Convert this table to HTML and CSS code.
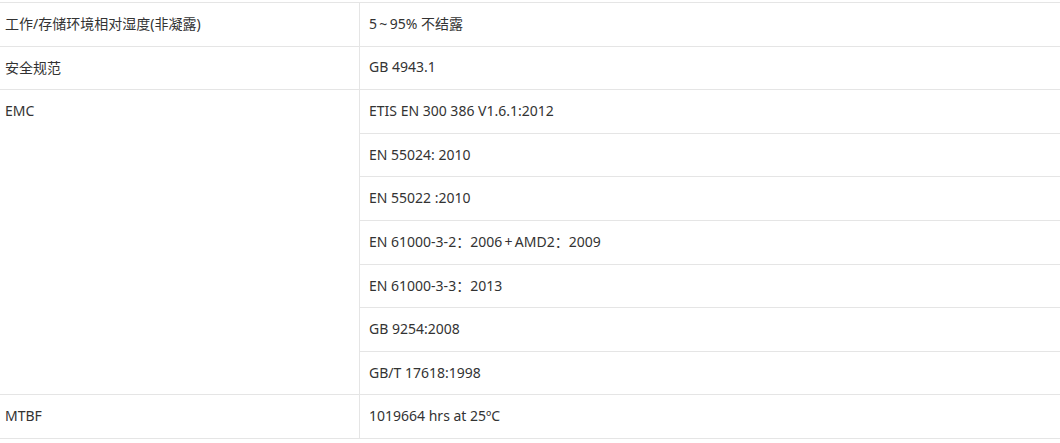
FILE: index.html
```html
<!DOCTYPE html>
<html lang="zh-CN">
<head>
<meta charset="utf-8">
<title>规格</title>
<link rel="stylesheet" href="styles.css">
</head>
<body>
<div class="spec">
  <div class="cell key">工作/存储环境相对湿度(非凝露)</div>
  <div class="cell val">5&thinsp;~&thinsp;95% 不结露</div>
  <div class="cell key">安全规范</div>
  <div class="cell val">GB 4943.1</div>
  <div class="cell key span7"><div class="first">EMC</div></div>
  <div class="cell val">ETIS EN 300 386 V1.6.1:2012</div>
  <div class="cell val">EN 55024: 2010</div>
  <div class="cell val">EN 55022 :2010</div>
  <div class="cell val">EN 61000-3-2：2006&thinsp;+&thinsp;AMD2：2009</div>
  <div class="cell val">EN 61000-3-3：2013</div>
  <div class="cell val">GB 9254:2008</div>
  <div class="cell val">GB/T 17618:1998</div>
  <div class="cell key">MTBF</div>
  <div class="cell val">1019664 hrs at 25ºC</div>
</div>
</body>
</html>
```

FILE: styles.css
```css
html, body {
  margin: 0;
  padding: 0;
  background: #fff;
}
body {
  font-family: "Noto Sans", "Noto Sans CJK SC", sans-serif;
  font-size: 14px;
  color: #333;
}
.spec {
  margin-top: 2px;
  border-top: 1px solid #e5e5e5;
  display: grid;
  grid-template-columns: 360px 1fr;
  grid-auto-rows: 43.6px;
}
.cell {
  box-sizing: border-box;
  border-bottom: 1px solid #e5e5e5;
  display: flex;
  align-items: center;
  white-space: nowrap;
  padding-bottom: 2px;
}
.key {
  border-right: 1px solid #e5e5e5;
  padding-left: 5px;
  padding-right: 5px;
}
.val {
  padding-left: 9px;
  padding-right: 9px;
}
.span7 {
  grid-row: span 7;
  align-items: flex-start;
  padding-bottom: 0;
}
.first {
  height: 40.6px;
  display: flex;
  align-items: center;
}
```
